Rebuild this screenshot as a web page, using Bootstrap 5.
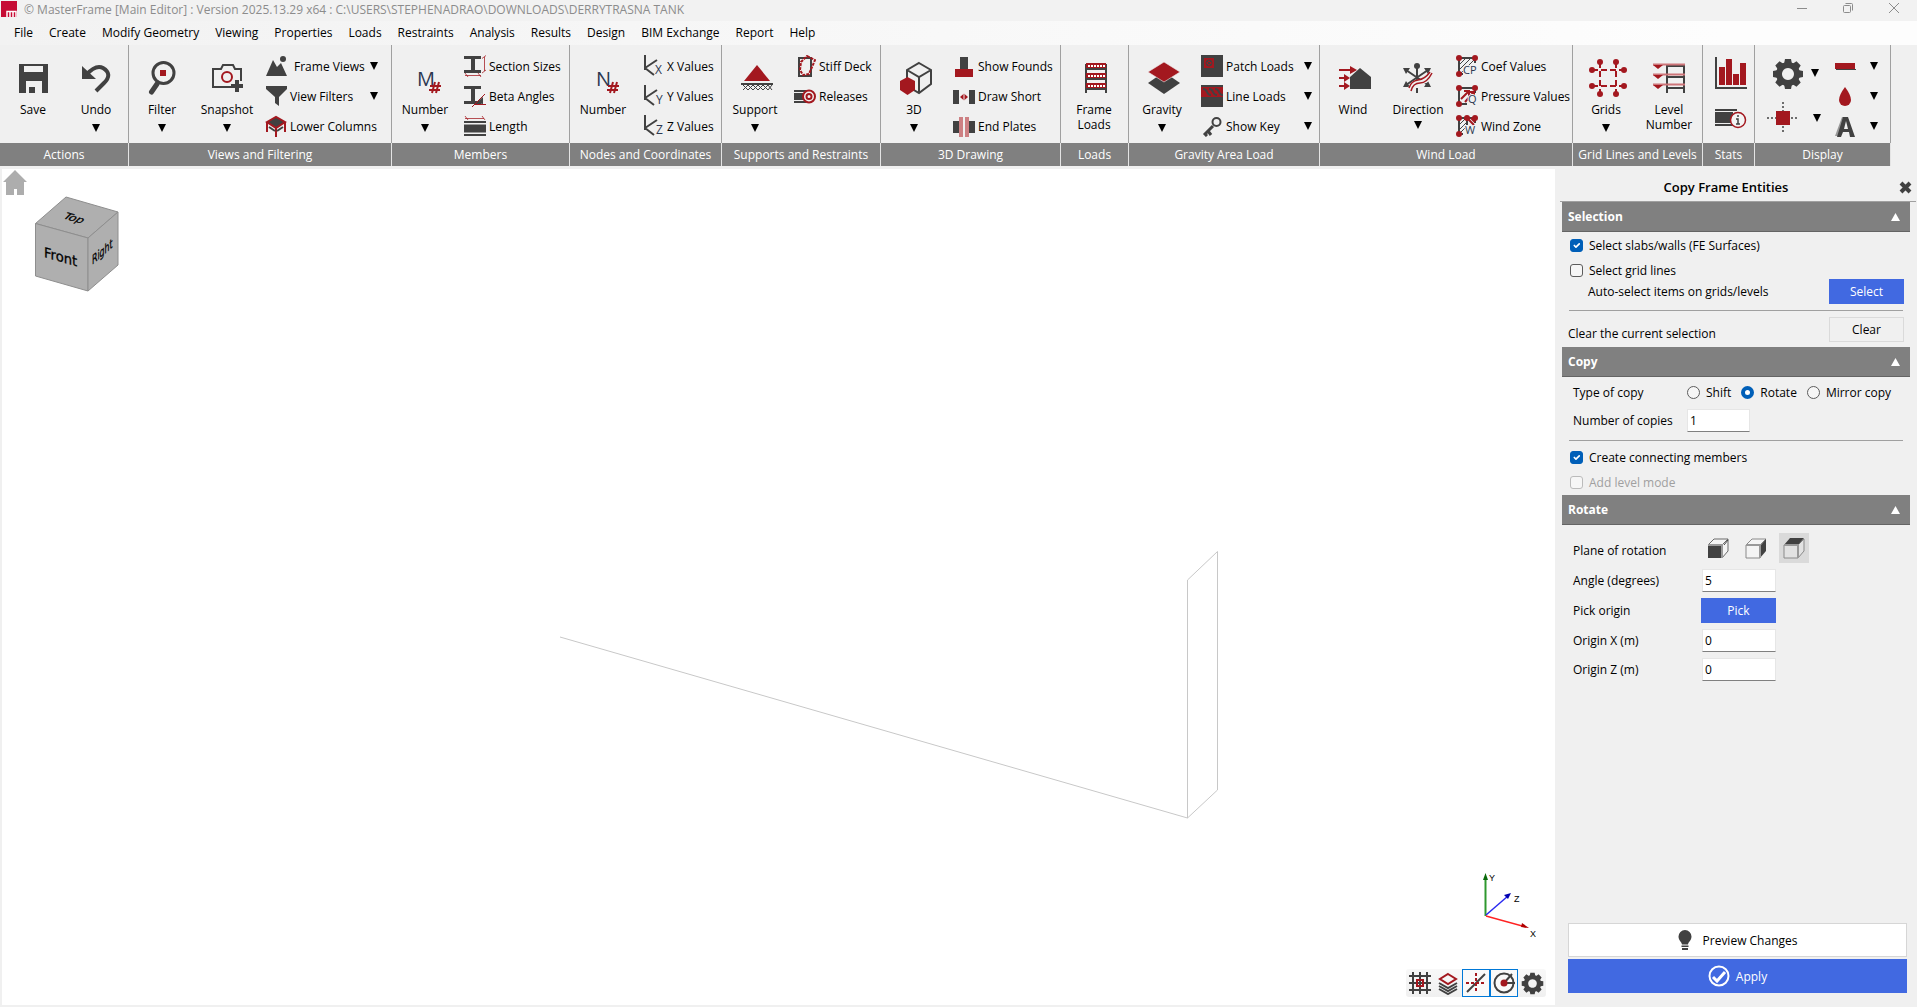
<!DOCTYPE html>
<html lang="en">
<head>
<meta charset="utf-8">
<meta name="viewport" content="width=device-width, initial-scale=1">
<title>MasterFrame [Main Editor]</title>
<link href="https://cdn.jsdelivr.net/npm/bootstrap@5.3.0/dist/css/bootstrap.min.css" rel="stylesheet">
<style>
:root{--ink:#414141;--red:#a3181f;--bar:#808080;--face:#f0f0f0;--blue:#4169e1;--tick:#005fb8}
body{font-family:"Open Sans","Noto Sans",sans-serif;font-size:12px;line-height:15px;color:#000;background:var(--face)}
button{font:inherit;color:inherit;background:none;border:0;padding:0}
svg{display:block;flex:none}
.k{fill:var(--ink)} .r{fill:var(--red)} .w{fill:#fff}
.ks{fill:none;stroke:var(--ink)} .rs{fill:none;stroke:var(--red)}
/* title bar and menu */
.titlebar{height:21px;background:#f2f2f2;color:#8c8c8c;gap:6px}
.titletext{padding-top:2px}
.winbtn{width:46px;height:16px}
.menubar{height:24px;background:linear-gradient(90deg,#f2f2f2,#fdfdfd 90%);padding:0 0 1px 14px;gap:16px}
.menubar a{color:#000;text-decoration:none}
/* ribbon */
.rgroup{flex:none}
.rbody{height:98px;border-right:1px solid #a0a0a0;background:var(--face)}
.rcap{height:23px;line-height:23px;background:var(--bar);border-right:1px solid #e4e4e4;color:#fff;text-align:center;white-space:nowrap}
.g-actions{width:129px}.g-views{width:263px}.g-members{width:178px}.g-nodes{width:152px}
.g-supports{width:159px}.g-draw{width:180px}.g-loads{width:68px}.g-gravity{width:191px}
.g-wind{width:253px}.g-grid{width:130px}.g-stats{width:52px}.g-display{width:136px}
.big{width:66px;padding-top:13px}
.big-b{width:64px}.big-c{width:60px}
.big-ico{height:40px;width:100%;margin-bottom:4px}
.tri{display:block;width:8px;height:8px;background:#000;clip-path:polygon(0 0,100% 0,50% 100%)}
.big .tri{margin-top:7px}
.big .tri-near{margin-top:4px}
.smalls{padding-top:6px;margin-left:6px}
.small-btn{height:30px;gap:3px;text-align:left;white-space:nowrap}
.small-btn .tri{margin-left:auto}
.smalls-views{width:113px}.smalls-gravity{width:111px}
/* workspace */
.stage{padding:3px 0 2px 2px}
.canvas3d{background:#fff;min-height:400px}
.model{width:100%;height:100%;position:absolute;left:0;top:0}
.home-btn{position:absolute;left:1px;top:1px}
.viewcube{position:absolute;left:32px;top:26px}
.axes{position:absolute;right:19px;bottom:64px}
.snapbar{position:absolute;right:9px;bottom:8px;background:linear-gradient(#f8f8f8,#f0f0f0);border-radius:3px}
.snapbar button{width:28px;height:28px;border:1px solid transparent}
.snapbar button.on{border-color:#0078d7;background:#f9f9f9}
/* side panel */
.side{width:362px;flex:none;padding:0 1px 14px 5px}
.side-title{height:36px;padding:7px 24px 0 0;border-bottom:1px solid #a0a0a0;font-size:13px;font-weight:600}
.side-x{position:absolute;right:5px;top:15px}
.sect{margin:0 6px 0 2px}
.sect-head{height:30px;width:100%;background:var(--bar);border-bottom:1px solid #646464;color:#fff;font-weight:700;padding:0 10px 0 6px}
.sect-head .tri{background:#fff;transform:rotate(180deg);width:9px}
.sect-body{padding:5px 6px}
.body-copy{padding-top:7px;padding-bottom:4px}
.body-rotate{padding-top:8px;gap:6px}
.chk{height:17px;gap:6px;padding-left:2px}
.chk .form-check-input,.rad .form-check-input{width:13px;height:13px;margin:0;float:none;border-color:#5c5c5c;background-color:#f6f6f6;box-shadow:none}
.chk .form-check-input{border-radius:3px}
.chk .form-check-input:checked{background-color:var(--tick);border-color:var(--tick)}
.chk .form-check-input:disabled{border-color:#bbb;opacity:1}
.chk .form-check-input:disabled+label{color:#a0a0a0;opacity:1}
.rad{gap:6px;margin-right:10px;height:17px}
.rad .form-check-input:checked{border:4px solid var(--tick);background:#fff}
.act{width:75px;height:25px;background:var(--blue);color:#fff}
.act-plain{width:75px;height:25px;border:1px solid #dadada}
.rule{height:1px;background:#a0a0a0;margin:6px 1px}
.fld{height:23px;border:1px solid #e6e6e6;border-bottom:1px solid #808080;background:#fff;padding:0 2px;font:inherit;border-radius:0}
.fld-s{width:63px}.fld-m{width:74px;margin-left:1px}
.lab-a{width:115px;padding-left:5px}
.lab-b{width:133px;padding-left:5px}
.planes{margin-left:2px;gap:8px}
.plane{width:30px;height:30px}
.plane.on{background:#dadada}
.foot{margin:0 9px 0 8px;gap:2px}
.foot button{height:34px}
.preview{background:#fff;border:1px solid #d6d6d6;gap:11px}
.apply{background:var(--blue);color:#fff;gap:6px}
</style>
</head>
<body class="d-flex flex-column min-vh-100">
<header class="titlebar d-flex align-items-start">
  <svg width="18" height="18"><rect x="1" y="1" width="16" height="16" fill="#c60c35"/><path d="M7 17V11.500h9V17M10 17v-5M13 17v-5" stroke="#fff" stroke-width="1.500" fill="none"/></svg>
  <span class="titletext text-nowrap">© MasterFrame [Main Editor] : Version 2025.13.29 x64 : C:\USERS\STEPHENADRAO\DOWNLOADS\DERRYTRASNA TANK</span>
  <div class="ms-auto d-flex">
    <button class="winbtn d-flex justify-content-center" aria-label="Minimize"><svg width="12" height="16"><path d="M1 8.500h10" stroke="#8c8c8c"/></svg></button>
    <button class="winbtn d-flex justify-content-center" aria-label="Restore"><svg width="12" height="16" fill="none" stroke="#8c8c8c"><rect x="1.500" y="5.500" width="7" height="7" rx="1"/><path d="M3.500 3.500h6q1 0 1 1v6"/></svg></button>
    <button class="winbtn d-flex justify-content-center" aria-label="Close"><svg width="12" height="16"><path d="M1 3l10 10M11 3L1 13" stroke="#8c8c8c"/></svg></button>
  </div>
</header>
<nav class="menubar d-flex align-items-center text-nowrap">
  <a href="#">File</a><a href="#">Create</a><a href="#">Modify Geometry</a><a href="#">Viewing</a><a href="#">Properties</a><a href="#">Loads</a><a href="#">Restraints</a><a href="#">Analysis</a><a href="#">Results</a><a href="#">Design</a><a href="#">BIM Exchange</a><a href="#">Report</a><a href="#">Help</a>
</nav>

<div class="d-flex overflow-hidden">
  <section class="rgroup g-actions">
    <div class="rbody d-flex align-items-start">
      <button class="big"><span class="big-ico d-flex align-items-center justify-content-center"><svg width="29" height="29"><path class="k" fill-rule="evenodd" d="M0 0h29v29H0zM5 2v6h19V2zM7 17v12h16V17z"/><path class="k" d="M10 23h6v6h-6z"/></svg></span>Save</button>
      <button class="big big-c d-flex flex-column align-items-center"><span class="big-ico d-flex align-items-center justify-content-center"><svg width="29" height="29"><path class="k" d="M0 2v13h14z"/><path class="ks" stroke-width="4" d="M4 11Q14 0 21 4 31 10 22 19L14 27"/></svg></span>Undo<i class="tri"></i></button>
    </div><div class="rcap">Actions</div>
  </section>
  <section class="rgroup g-views">
    <div class="rbody d-flex align-items-start">
      <button class="big d-flex flex-column align-items-center"><span class="big-ico d-flex align-items-center justify-content-center"><svg width="28" height="34"><circle class="ks" stroke-width="3" cx="15.500" cy="12" r="10.500"/><path class="ks" stroke-width="5" stroke-linecap="round" d="M9 23L3.500 31"/><path class="r" d="M12 9h6v6h-6z"/></svg></span>Filter<i class="tri"></i></button>
      <button class="big big-b d-flex flex-column align-items-center"><span class="big-ico d-flex align-items-center justify-content-center"><svg width="32" height="30"><path class="ks" stroke-width="2" d="M20 24H2V6h8l2-4h10l2 4h6v12"/><circle class="rs" stroke-width="2" cx="16" cy="14" r="5"/><path class="ks" stroke-width="4" d="M26 17v12M20 23h12"/></svg></span>Snapshot<i class="tri"></i></button>
      <div class="smalls smalls-views d-flex flex-column">
        <button class="small-btn d-flex align-items-center"><svg width="22" height="22"><path class="k" d="M1 21L8 5l4 7 4-4 6 13z"/><circle class="k" cx="18" cy="4" r="3"/></svg><span class="ps-1">Frame Views</span><i class="tri"></i></button>
        <button class="small-btn d-flex align-items-center"><svg width="22" height="22"><path class="k" d="M1 1h21v3l-8 8v9l-4-3v-6L1 4z"/></svg>View Filters<i class="tri"></i></button>
        <button class="small-btn d-flex align-items-center"><svg width="22" height="22"><path d="M2 7l9-5 9 5-9 6z" fill="#414141" stroke="#a3181f" stroke-width="2"/><path class="rs" stroke-width="2" d="M2 7v10M11 13v9M20 7v10"/><path class="ks" stroke-width="2" d="M4 12l6 4M18 12l-6 4"/></svg>Lower Columns</button>
      </div>
    </div><div class="rcap">Views and Filtering</div>
  </section>
  <section class="rgroup g-members">
    <div class="rbody d-flex align-items-start">
      <button class="big d-flex flex-column align-items-center"><span class="big-ico d-flex align-items-center justify-content-center"><svg width="32" height="32"><text x="8" y="24" font-size="20" fill="#2c3850">M</text><path class="rs" stroke-width="2" d="M21 24h11M20 28h11M26 20l-3 11M30 20l-3 11"/></svg></span>Number<i class="tri"></i></button>
      <div class="smalls d-flex flex-column">
        <button class="small-btn d-flex align-items-center"><svg width="22" height="22"><path class="ks" stroke-width="3" d="M0 2.500h17M0 16.500h17"/><path class="ks" stroke-width="4" d="M9 3v13"/><path class="rs" opacity=".75" d="M20.500 2v14M18 3.500l4-3M18 18l4-3M1 20.500h16M1 18l3 4M14 18l3 4"/></svg>Section Sizes</button>
        <button class="small-btn d-flex align-items-center"><svg width="22" height="22"><path class="ks" stroke-width="3" d="M0 2.500h17M0 17.500h17"/><path class="ks" stroke-width="4" d="M9 3v13"/><path class="k" d="M12 18l7-6v7z"/><path class="rs" d="M8 22L21 9M10 19.500h12"/></svg>Beta Angles</button>
        <button class="small-btn d-flex align-items-center"><svg width="22" height="22"><path class="rs" opacity=".75" d="M1 3.500h19M1 1l3 4M18 1l3 4"/><path class="ks" stroke-width="2" d="M0 7h22M0 20h22"/><path class="k" d="M0 9.500h22v8H0z"/></svg>Length</button>
      </div>
    </div><div class="rcap">Members</div>
  </section>
  <section class="rgroup g-nodes">
    <div class="rbody d-flex align-items-start">
      <button class="big d-flex flex-column align-items-center"><span class="big-ico d-flex align-items-center justify-content-center"><svg width="32" height="32"><text x="9" y="24" font-size="20" fill="#2c3850">N</text><path class="rs" stroke-width="2" d="M21 24h11M20 28h11M26 20l-3 11M30 20l-3 11"/></svg></span>Number</button>
      <div class="smalls d-flex flex-column">
        <button class="small-btn d-flex align-items-center"><svg width="22" height="22"><path class="ks" stroke-width="2" d="M3 0v15M3 13l12-8M3 13l9 7"/><text x="13" y="19" font-size="12" fill="#2c3850">X</text></svg>X Values</button>
        <button class="small-btn d-flex align-items-center"><svg width="22" height="22"><path class="ks" stroke-width="2" d="M3 0v15M3 13l12-8M3 13l9 7"/><text x="14" y="19" font-size="12" fill="#2c3850">Y</text></svg>Y Values</button>
        <button class="small-btn d-flex align-items-center"><svg width="22" height="22"><path class="ks" stroke-width="2" d="M3 0v15M3 13l12-8M3 13l9 7"/><text x="14" y="19" font-size="12" fill="#2c3850">Z</text></svg>Z Values</button>
      </div>
    </div><div class="rcap">Nodes and Coordinates</div>
  </section>
  <section class="rgroup g-supports">
    <div class="rbody d-flex align-items-start">
      <button class="big d-flex flex-column align-items-center"><span class="big-ico ps-1 d-flex align-items-center justify-content-center"><svg width="32" height="26"><path class="r" d="M16 0l13 16H3z"/><path class="ks" stroke-width="2" d="M0 19h32"/><path class="ks" d="M2 20l5 5 5-5 5 5 5-5 5 5 4-5M2 25l5-5 5 5 5-5 5 5 5-5 4 5"/></svg></span>Support<i class="tri"></i></button>
      <div class="smalls d-flex flex-column">
        <button class="small-btn d-flex align-items-center"><svg width="22" height="22"><path class="ks" stroke-width="2" d="M5 3h12v18H5z"/><path class="rs" stroke-width="2" stroke-dasharray="3 1" d="M13 1l8 4-6 14-6 1-3-5 1-8z"/></svg>Stiff Deck</button>
        <button class="small-btn d-flex align-items-center"><svg width="22" height="22"><path class="ks" stroke-width="2" d="M0 6h12M0 17h12"/><path class="k" d="M0 8h10v7H0z"/><circle class="rs" stroke-width="2" cx="15" cy="11.500" r="6"/><circle class="rs" stroke-width="2" cx="15" cy="11.500" r="2.500"/></svg>Releases</button>
      </div>
    </div><div class="rcap">Supports and Restraints</div>
  </section>
  <section class="rgroup g-draw">
    <div class="rbody d-flex align-items-start">
      <button class="big d-flex flex-column align-items-center"><span class="big-ico ps-1 d-flex align-items-center justify-content-center"><svg width="32" height="34"><path class="ks" stroke-width="2" d="M19 2l12 7v14l-12 9-12-7V9zM7 9l12 7 12-7M19 16v15"/><path class="r" d="M7.500 16l7.500 4v9l-7.500 5L0 29v-9z"/></svg></span>3D<i class="tri"></i></button>
      <div class="smalls d-flex flex-column">
        <button class="small-btn d-flex align-items-center"><svg width="22" height="22"><path class="k" d="M7 2h8v12H7z"/><path class="r" d="M2 14h18v8H2z"/></svg>Show Founds</button>
        <button class="small-btn d-flex align-items-center"><svg width="22" height="22"><path class="k" d="M0 5h6v14H0zM16 5h6v14h-6z"/><path class="r" d="M7 12l4-3.500v7zM15 12l-4-3.500v7z"/><path d="M11 7v10" stroke="#f0f0f0"/></svg>Draw Short</button>
        <button class="small-btn d-flex align-items-center"><svg width="22" height="22"><path class="k" d="M0 6h7v12H0zM15 6h7v12h-7z"/><path d="M6 2h4v20H6zM12 2h4v20h-4z" fill="#cd8083"/></svg>End Plates</button>
      </div>
    </div><div class="rcap">3D Drawing</div>
  </section>
  <section class="rgroup g-loads">
    <div class="rbody d-flex align-items-start">
      <button class="big"><span class="big-ico ps-1 d-flex align-items-center justify-content-center"><svg width="22" height="30"><path class="ks" stroke-width="2" d="M1 1v29M21 1v29M1 6h20M1 16h20M1 26h20"/><path class="r" d="M1 0h20v5H1zM1 10h20v5H1zM1 20h20v5H1z"/><path d="M3 3h17M3 13h17M3 23h17" stroke="#fff" stroke-width="2" stroke-dasharray="2 1"/></svg></span>Frame<br>Loads</button>
    </div><div class="rcap">Loads</div>
  </section>
  <section class="rgroup g-gravity">
    <div class="rbody d-flex align-items-start">
      <button class="big d-flex flex-column align-items-center"><span class="big-ico ps-1 d-flex align-items-center justify-content-center"><svg width="32" height="32"><path class="k" d="M16 10l16 11-16 11L0 21z"/><path class="r" stroke="#f0f0f0" stroke-width=".6" d="M16 0l16 10-16 10L0 10z"/></svg></span>Gravity<i class="tri"></i></button>
      <div class="smalls smalls-gravity d-flex flex-column">
        <button class="small-btn d-flex align-items-center"><svg width="22" height="22"><path class="k" d="M0 0h22v22H0z"/><path class="r" d="M3 3h10v10H3z"/><circle class="ks" cx="8" cy="8" r="3"/><path class="ks" d="M6 6l4 4M10 6l-4 4"/></svg>Patch Loads<i class="tri"></i></button>
        <button class="small-btn d-flex align-items-center"><svg width="22" height="22"><path class="k" d="M0 0h22v22H0z"/><path class="r" d="M0 2h22v10H0z"/><path class="ks" stroke-width="2" d="M2 4q3 0 4 3t4 3M8 4q3 0 4 3t4 3M14 4q3 0 4 3t4 3"/></svg>Line Loads<i class="tri"></i></button>
        <button class="small-btn d-flex align-items-center"><svg width="22" height="22"><circle class="ks" stroke-width="2" cx="15.500" cy="7" r="4"/><path class="ks" stroke-width="3" d="M12 11L3 20M7 16l3 4M3 18l3 3"/></svg>Show Key<i class="tri"></i></button>
      </div>
    </div><div class="rcap">Gravity Area Load</div>
  </section>
  <section class="rgroup g-wind">
    <div class="rbody d-flex align-items-start">
      <button class="big"><span class="big-ico ps-1 d-flex align-items-center justify-content-center"><svg width="32" height="24"><path class="k" d="M21 2l11 9v12H11V11z"/><path class="rs" stroke-width="2" d="M0 4h12M0 12h6M0 20h6"/><path class="r" d="M11 0l7 4-7 4zM5 8l6 4-6 4zM5 16l6 4-6 4z"/></svg></span>Wind</button>
      <button class="big big-b d-flex flex-column align-items-center"><span class="big-ico d-flex align-items-center justify-content-center"><svg width="30" height="30"><path class="ks" stroke-width="2" d="M14 4v18M3 7l22 15M25 7L3 22M14 25v5"/><circle class="k" cx="14" cy="3" r="3"/><path class="k" d="M0 5l7 0-4 6zM28 5l-7 0 4 6zM0 24l7 0-4-6zM28 24l-7 0 4-6z"/><path d="M7 27q2-8 10-8t12-10" fill="none" stroke="#f0f0f0" stroke-width="5"/><path class="rs" stroke-width="1.500" d="M6 25q2-7 9-8t12-8M8 28q2-8 9-8t12-10"/></svg></span>Direction<i class="tri tri-near"></i></button>
      <div class="smalls d-flex flex-column">
        <button class="small-btn d-flex align-items-center"><svg width="22" height="22"><path class="ks" stroke-width="2" d="M3 19V3h16v5M3 19h4"/><path class="ks" d="M4 14L14 4M5 18L18 5M4 9l5-5"/><circle class="r" cx="3" cy="3" r="3"/><circle class="r" cx="19" cy="3" r="3"/><circle class="r" cx="3" cy="19" r="3"/><text x="7" y="19" font-size="11" fill="#2c3850" stroke="#f0f0f0" stroke-width="2" paint-order="stroke">CP</text></svg>Coef Values</button>
        <button class="small-btn d-flex align-items-center"><svg width="22" height="22"><path class="ks" stroke-width="2" d="M3 19V3h16v5M3 19h8"/><path class="rs" stroke-width="2" d="M5 14l7-7M9 17l8-9M8 6h5v5M13 7h5v5"/><circle class="r" cx="3" cy="3" r="3"/><circle class="r" cx="19" cy="3" r="3"/><circle class="r" cx="3" cy="19" r="3"/><text x="12" y="18" font-size="11" fill="#2c3850" stroke="#f0f0f0" stroke-width="2" paint-order="stroke">Q</text></svg>Pressure Values</button>
        <button class="small-btn d-flex align-items-center"><svg width="22" height="22"><path class="ks" stroke-width="2" d="M3 19V3h16v5M3 19h4M11 3v7"/><path class="ks" d="M4 14l6-6M4 9l5-5M4 18l6-6"/><path class="rs" stroke-width="2" d="M12 4l6 6M15 3l4 4"/><circle class="r" cx="3" cy="3" r="3"/><circle class="r" cx="11" cy="3" r="3"/><circle class="r" cx="19" cy="3" r="3"/><circle class="r" cx="3" cy="19" r="3"/><text x="9" y="19" font-size="11" fill="#2c3850" stroke="#f0f0f0" stroke-width="2" paint-order="stroke">W</text></svg>Wind Zone</button>
      </div>
    </div><div class="rcap">Wind Load</div>
  </section>
  <section class="rgroup g-grid">
    <div class="rbody d-flex align-items-start">
      <button class="big d-flex flex-column align-items-center"><span class="big-ico ps-1 d-flex align-items-center justify-content-center"><svg width="38" height="38"><path class="rs" stroke-width="2" stroke-dasharray="6 3" d="M11 3v32M27 3v32M3 11h32M3 27h32"/><g class="r"><circle cx="11" cy="3" r="3"/><circle cx="27" cy="3" r="3"/><circle cx="11" cy="35" r="3"/><circle cx="27" cy="35" r="3"/><circle cx="3" cy="11" r="3"/><circle cx="3" cy="27" r="3"/><circle cx="35" cy="11" r="3"/><circle cx="35" cy="27" r="3"/></g></svg></span>Grids<i class="tri"></i></button>
      <button class="big big-c"><span class="big-ico d-flex align-items-center justify-content-center"><svg width="32" height="30"><path class="ks" stroke-width="2" d="M14 30V3h17v27M14 14h17M14 25h17"/><path d="M0 1.500h32M0 11.500h32M0 21.500h32" stroke="#cd7579" stroke-width="2"/><path class="r" d="M0 2h10L5 6zM0 12h10l-5 4zM0 22h10l-5 4z"/></svg></span>Level<br>Number</button>
    </div><div class="rcap">Grid Lines and Levels</div>
  </section>
  <section class="rgroup g-stats">
    <div class="rbody d-flex flex-column ps-2 pt-2">
      <button class="ms-1 mt-1 mb-3" aria-label="Statistics"><svg width="32" height="34"><path class="ks" stroke-width="2" d="M1 0v31h31"/><path class="r" d="M4 10h6v18H4zM11 2h6v26h-6zM18 17h6v11h-6zM25 6h6v22h-6z"/></svg></button>
      <button class="ms-1" aria-label="Member info"><svg width="32" height="22"><path class="ks" stroke-width="2" d="M0 3h22M0 18h20"/><path class="k" d="M0 5h18v11H0z"/><circle cx="23" cy="13" r="7.500" fill="#f4f4f4" stroke="#a3181f" stroke-width="1.500"/><path class="ks" stroke-width="1.500" d="M23 8v2M21 12h2v5M21 17h4"/></svg></button>
    </div><div class="rcap">Stats</div>
  </section>
  <section class="rgroup g-display">
    <div class="rbody d-flex align-items-start">
      <div class="d-flex flex-column pt-2 ps-2 ms-1">
        <button class="d-flex align-items-center pt-1 mb-2" aria-label="Settings"><svg width="44" height="32"><use href="#gear" x="5" y="1" width="32" height="32"/></svg><i class="tri"></i></button>
        <button class="d-flex align-items-center pt-1" aria-label="Nodes"><svg width="46" height="34"><path class="ks" stroke-width="1.500" stroke-dasharray="2 2" d="M0 17h32M16 1v32"/><path class="r" d="M9 10h14v14H9z"/></svg><i class="tri"></i></button>
      </div>
      <div class="smalls d-flex flex-column ps-2">
        <button class="small-btn d-flex align-items-center" aria-label="Line thickness"><svg width="32" height="22"><path class="k" d="M1 14h20v1H1z"/><path class="r" d="M0 8h20v6H0z"/></svg><i class="tri"></i></button>
        <button class="small-btn d-flex align-items-center" aria-label="Colour"><svg width="32" height="22"><path class="r" d="M10 2q6 8 6 13a6 6 0 0 1-12 0q0-5 6-13z"/></svg><i class="tri"></i></button>
        <button class="small-btn d-flex align-items-center" aria-label="Font"><svg width="32" height="22"><path d="M0 21L7 2h3L3 21z" fill="#999"/><path class="k" fill-rule="evenodd" d="M8 2h5l7 20h-5l-1-5H8l-2 5H2zM9 14h4l-2-8z"/></svg><i class="tri"></i></button>
      </div>
    </div><div class="rcap">Display</div>
  </section>
</div>

<svg width="0" height="0" class="position-absolute"><symbol id="gear" viewBox="0 0 32 32"><g fill="#414141"><g id="teeth"><path d="M13 1h6l1 5h-8zM13 31h6l1-5h-8zM1 13v6l5 1v-8zM31 13v6l-5 1v-8z"/></g><use href="#teeth" transform="rotate(45 16 16)"/><path fill-rule="evenodd" d="M16 4a12 12 0 1 0 .01 0zM16 10a6 6 0 1 1-.01 0z"/></g></symbol></svg>

<main class="d-flex flex-grow-1">
  <div class="stage d-flex flex-grow-1">
    <div class="canvas3d position-relative flex-grow-1">
      <svg class="model" viewBox="0 0 1553 836" fill="none" stroke="#c8c8c8"><path d="M558 468L1185.500 649 1215.500 621V382.500L1185.500 411V649"/></svg>
      <button class="home-btn" aria-label="Home view"><svg width="24" height="25" fill="#adadad"><path d="M12 0l12 12h-3v13h-7v-6h-3v6H3V12H0z"/></svg></button>
      <svg class="viewcube" width="90" height="98" font-family="DejaVu Sans,sans-serif">
        <g fill="#afafaf" stroke="#8e8e8e"><path d="M1.500 28.500L32 2l52 15L54 43z"/><path d="M1.500 28.500L54 43v53L1.500 81z"/><path d="M54 43l30-26v53L54 96z"/></g>
        <g stroke="#000" stroke-width=".3"><text font-size="14" transform="matrix(.94 .27 0 1 10 62)">Front</text>
        <text font-size="13" transform="matrix(.6 -.52 0 1 58 70)">Right</text>
        <text font-size="13" transform="matrix(.88 .26 -.6 .6 28 23)">Top</text></g>
      </svg>
      <svg class="axes" width="56" height="70" font-size="9" font-family="Liberation Sans,sans-serif">
        <path d="M5.500 45V6" stroke="#2f982f" stroke-width="2"/><path d="M5.500 2l2.500 7H3z" fill="#0a6a0a"/>
        <path d="M6 44L28 25" stroke="#2a2af0" stroke-width="1.500"/><path d="M31 22l-3 6-4-4z" fill="#0000b0"/>
        <path d="M6 45l40 11" stroke="#f22" stroke-width="1.500"/><path d="M49 57l-8-1 1-4z" fill="#b00000"/>
        <text x="9" y="10">Y</text><text x="34" y="31">Z</text><text x="53" y="66" text-anchor="middle">X</text>
      </svg>
      <div class="snapbar d-flex">
        <button class="d-flex align-items-center justify-content-center" aria-label="Grid"><svg width="24" height="24"><path class="ks" stroke-width="2" d="M1 5h22M1 12h22M1 19h22M5 1v22M12 1v22M19 1v22"/><path d="M9 9h6v6H9z" fill="none" stroke="#a3181f" stroke-width="2"/></svg></button>
        <button class="d-flex align-items-center justify-content-center" aria-label="Layers"><svg width="24" height="24"><path class="ks" stroke-width="2" d="M3 12l9 5 9-5M3 15l9 5 9-5"/><path class="ks" stroke-width="2" d="M3 18l9 5 9-5"/><path d="M12 3l8 5-8 5-8-5z" fill="#f6f6f6" stroke="#a3181f" stroke-width="2"/></svg></button>
        <button class="on d-flex align-items-center justify-content-center" aria-label="Snap to member"><svg width="24" height="24"><path class="ks" stroke-width="2" d="M3 21L21 3"/><path class="rs" stroke-width="2" stroke-dasharray="3 2" d="M2 12h20M12 2v20"/></svg></button>
        <button class="on d-flex align-items-center justify-content-center" aria-label="Orbit"><svg width="24" height="24"><circle class="ks" stroke-width="2" cx="12" cy="12" r="9.500"/><path class="ks" stroke-width="2" d="M12 12L20 3M12 12h11"/><circle class="r" cx="12" cy="12" r="3.500"/></svg></button>
        <button class="d-flex align-items-center justify-content-center" aria-label="Options"><svg width="23" height="23"><use href="#gear" width="23" height="23"/></svg></button>
      </div>
    </div>
  </div>

  <aside class="side d-flex flex-column position-relative">
    <div class="side-title d-flex align-items-center justify-content-center">Copy Frame Entities</div>
    <button class="side-x" aria-label="Close panel"><svg width="13" height="13"><path d="M2 2l9 9M11 2l-9 9" stroke="#414141" stroke-width="4"/></svg></button>
    <section class="sect">
      <button class="sect-head d-flex align-items-center justify-content-between">Selection<i class="tri"></i></button>
      <div class="sect-body">
        <div class="chk d-flex align-items-center mb-2"><input class="form-check-input" type="checkbox" id="c1" checked><label for="c1">Select slabs/walls (FE Surfaces)</label></div>
        <div class="chk d-flex align-items-center"><input class="form-check-input" type="checkbox" id="c2"><label for="c2">Select grid lines</label></div>
        <div class="d-flex align-items-center justify-content-between"><span class="ps-3 ms-1">Auto-select items on grids/levels</span><button class="act">Select</button></div>
        <div class="rule"></div>
        <div class="d-flex align-items-center justify-content-between"><span class="pt-2">Clear the current selection</span><button class="act-plain">Clear</button></div>
      </div>
    </section>
    <section class="sect">
      <button class="sect-head d-flex align-items-center justify-content-between">Copy<i class="tri"></i></button>
      <div class="sect-body body-copy">
        <div class="d-flex align-items-center mb-2" role="radiogroup"><span class="lab-a me-1">Type of copy</span>
          <div class="rad d-flex align-items-center"><input class="form-check-input" type="radio" name="t" id="r1"><label for="r1">Shift</label></div>
          <div class="rad d-flex align-items-center"><input class="form-check-input" type="radio" name="t" id="r2" checked><label for="r2">Rotate</label></div>
          <div class="rad d-flex align-items-center me-0"><input class="form-check-input" type="radio" name="t" id="r3"><label class="text-nowrap" for="r3">Mirror copy</label></div>
        </div>
        <div class="d-flex align-items-center"><label class="lab-a me-1" for="n1">Number of copies</label><input class="fld fld-s" id="n1" value="1"></div>
        <div class="rule my-2"></div>
        <div class="chk d-flex align-items-center mb-2"><input class="form-check-input" type="checkbox" id="c3" checked><label for="c3">Create connecting members</label></div>
        <div class="chk d-flex align-items-center"><input class="form-check-input" type="checkbox" id="c4" disabled><label for="c4">Add level mode</label></div>
      </div>
    </section>
    <section class="sect">
      <button class="sect-head d-flex align-items-center justify-content-between">Rotate<i class="tri"></i></button>
      <div class="sect-body body-rotate d-flex flex-column">
        <div class="d-flex align-items-center"><span class="lab-b pt-1">Plane of rotation</span>
          <div class="planes d-flex">
            <button class="plane d-flex align-items-center justify-content-center" aria-label="Front plane"><svg width="22" height="22"><path d="M1 8h14v13H1z" fill="#414141"/><path d="M1 8l6-6h14l-6 6z" fill="#f4f4f4" stroke="#6a6a6a"/><path d="M15 8l6-6v12l-6 7z" fill="#f4f4f4" stroke="#6a6a6a"/><path d="M17 8l4-5" stroke="#414141"/><path d="M1 8h14v13" fill="none" stroke="#999" stroke-width="2"/></svg></button>
            <button class="plane d-flex align-items-center justify-content-center" aria-label="Side plane"><svg width="22" height="22"><path d="M1 8l6-6h14l-6 6zM1 8h14v13H1z" fill="#f4f4f4" stroke="#8a8a8a"/><path d="M15 9l6-7v12l-6 7z" fill="#414141"/><path d="M1 8h14v13" fill="none" stroke="#999" stroke-width="2"/></svg></button>
            <button class="plane on d-flex align-items-center justify-content-center" aria-label="Top plane"><svg width="22" height="22"><path d="M1 8h14v13H1zM15 8l6-6v12l-6 7z" fill="#e2e2e2" stroke="#8a8a8a"/><path d="M1 8l6-7h14l-6 7z" fill="#414141"/><path d="M1 8h14v13" fill="none" stroke="#999" stroke-width="2"/></svg></button>
          </div>
        </div>
        <div class="d-flex align-items-center"><label class="lab-b" for="n2">Angle (degrees)</label><input class="fld fld-m" id="n2" value="5"></div>
        <div class="d-flex align-items-center"><span class="lab-b">Pick origin</span><button class="act">Pick</button></div>
        <div class="d-flex align-items-center"><label class="lab-b" for="n3">Origin X (m)</label><input class="fld fld-m" id="n3" value="0"></div>
        <div class="d-flex align-items-center"><label class="lab-b" for="n4">Origin Z (m)</label><input class="fld fld-m" id="n4" value="0"></div>
      </div>
    </section>
    <div class="foot d-flex flex-column mt-auto">
      <button class="preview d-flex align-items-center justify-content-center"><svg width="14" height="22"><path class="k" d="M7 1a6.500 6.500 0 0 1 6.500 6.500c0 4-3 5-3.500 8H4c-.5-3-3.500-4-3.500-8A6.500 6.500 0 0 1 7 1zM3.500 16.500h7v1.500h-7zM4 19h6v2H4z"/></svg>Preview Changes</button>
      <button class="apply d-flex align-items-center justify-content-center"><svg width="22" height="22"><circle cx="11" cy="11" r="9.500" fill="none" stroke="#fff" stroke-width="2"/><path d="M5 12l4 4 8-9" fill="none" stroke="#fff" stroke-width="3"/></svg>Apply</button>
    </div>
  </aside>
</main>
<script src="https://cdn.jsdelivr.net/npm/bootstrap@5.3.0/dist/js/bootstrap.bundle.min.js"></script>
</body>
</html>
